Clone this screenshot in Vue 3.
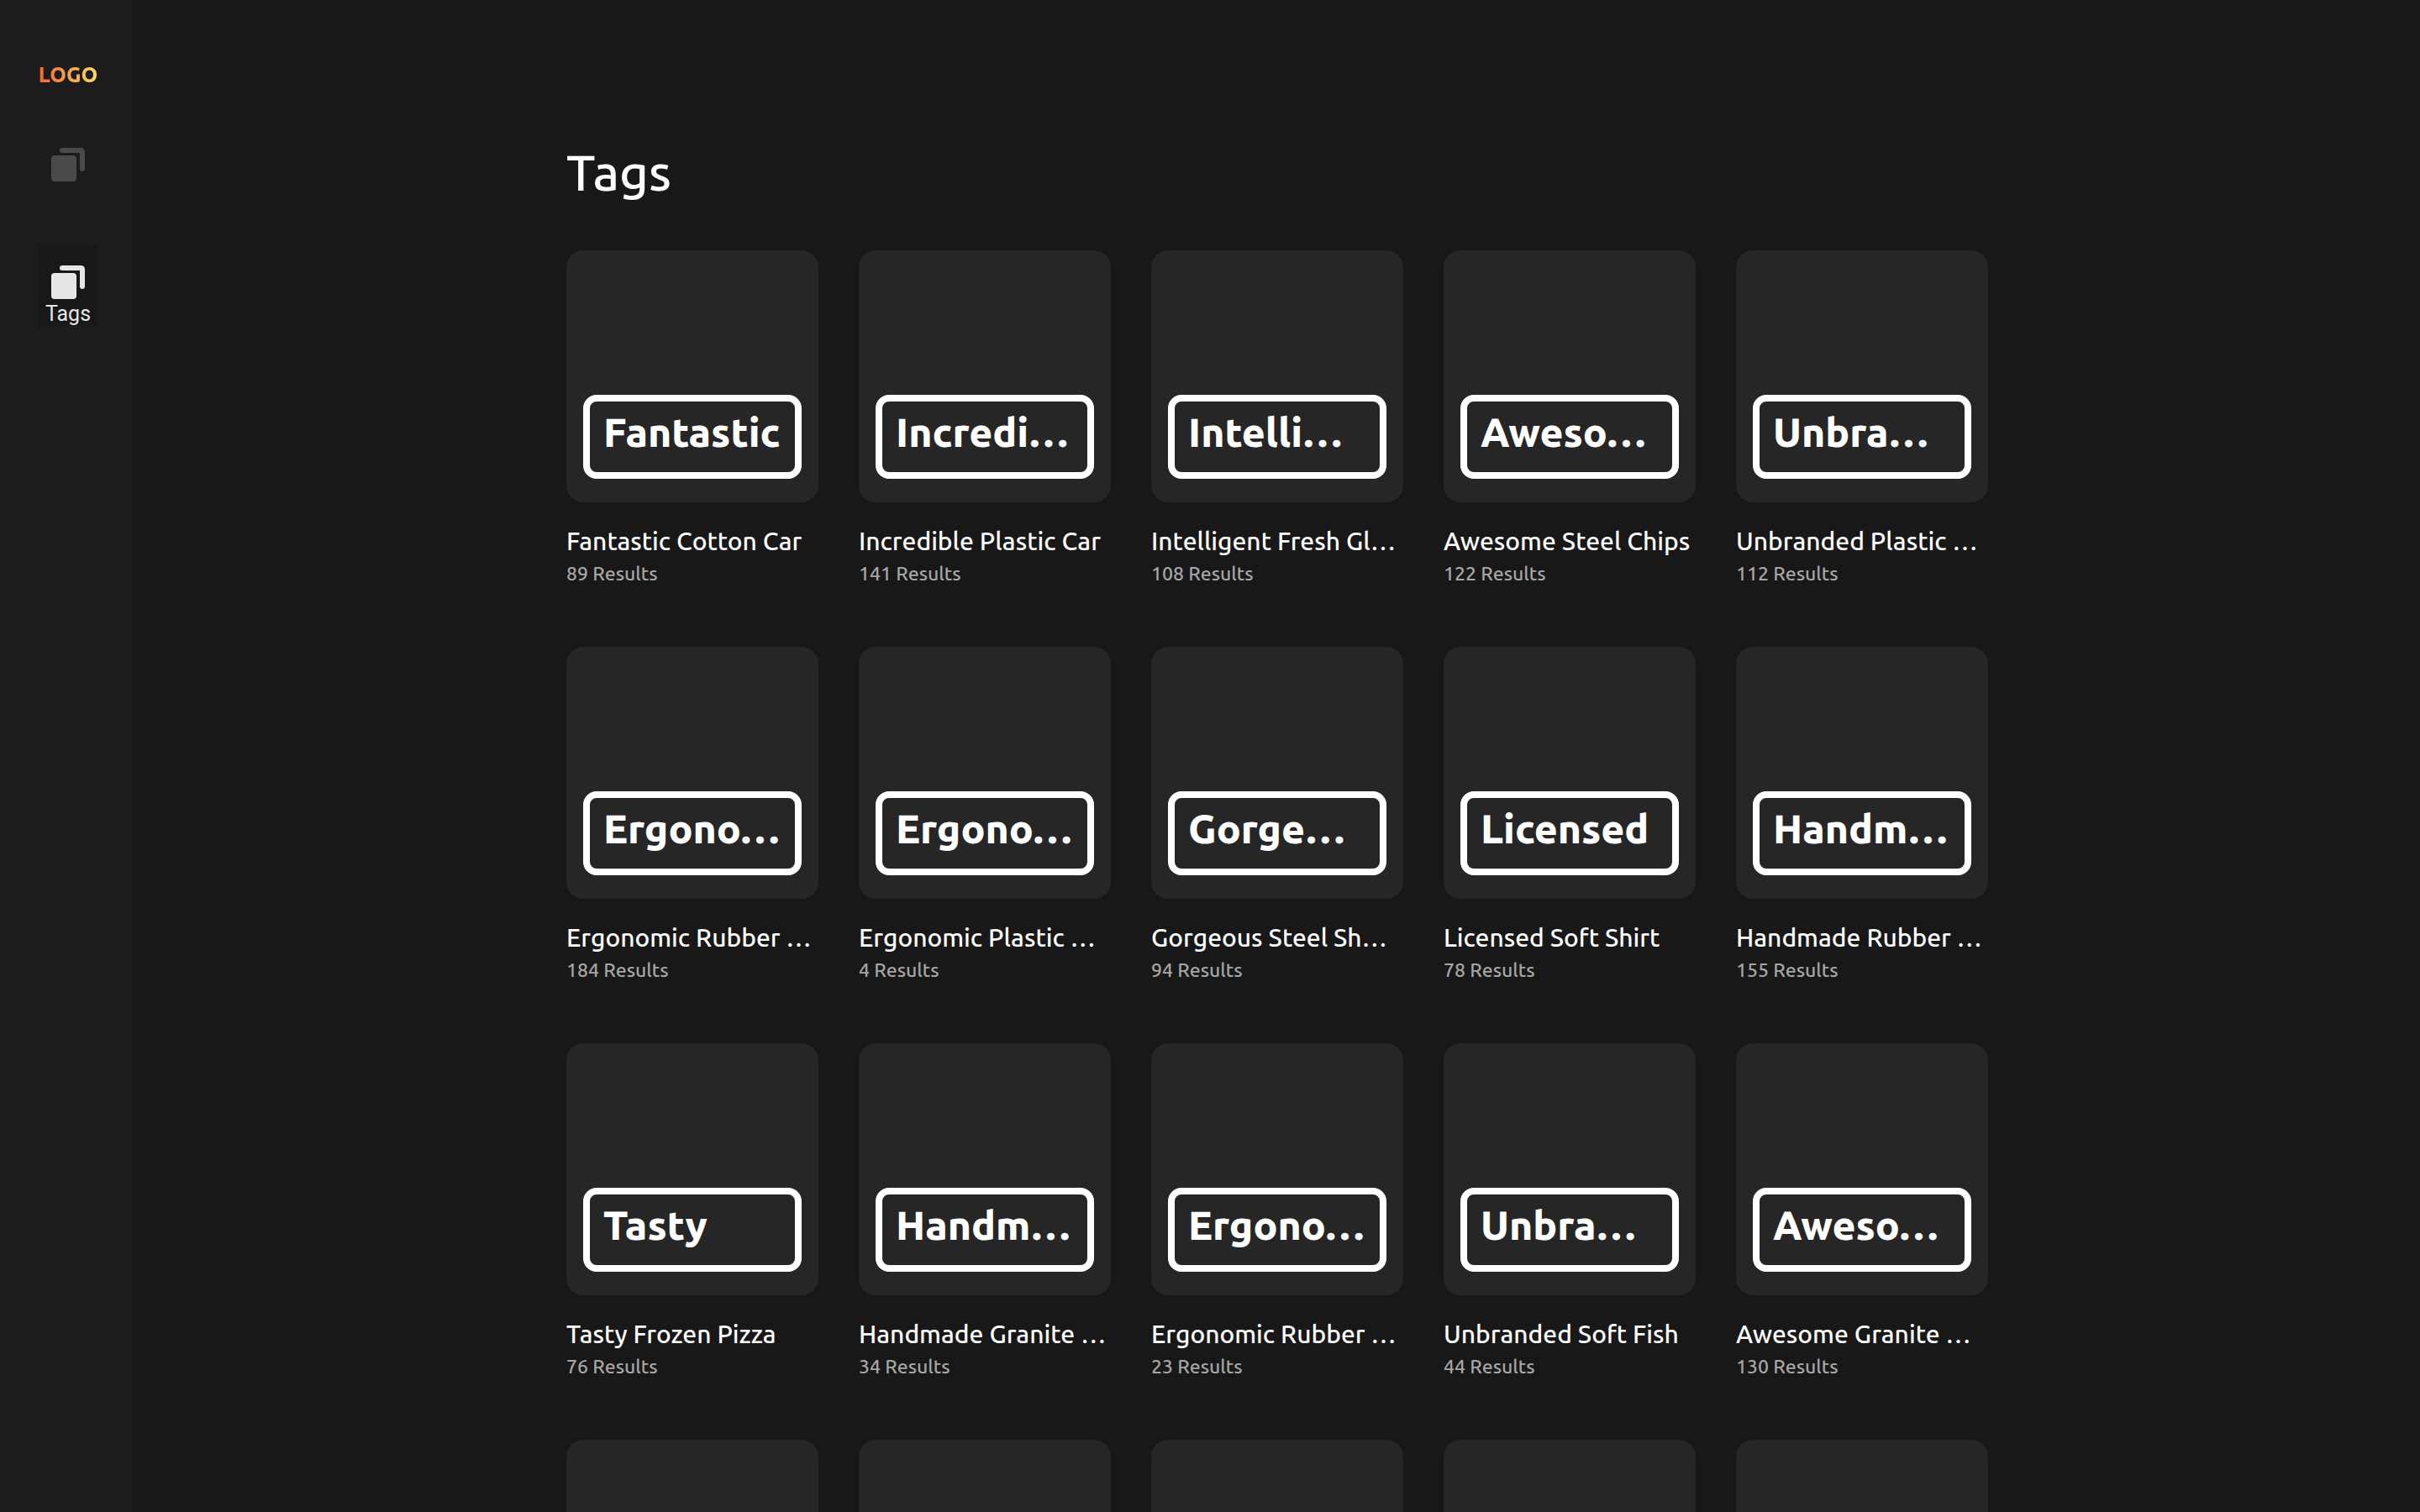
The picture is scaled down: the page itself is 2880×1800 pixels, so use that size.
<script setup>
const tags = [
  ['Fantastic', 'Fantastic Cotton Car', 89],
  ['Incredi…', 'Incredible Plastic Car', 141],
  ['Intelli…', 'Intelligent Fresh Gl…', 108],
  ['Aweso…', 'Awesome Steel Chips', 122],
  ['Unbra…', 'Unbranded Plastic …', 112],
  ['Ergono…', 'Ergonomic Rubber …', 184],
  ['Ergono…', 'Ergonomic Plastic …', 4],
  ['Gorge…', 'Gorgeous Steel Sh…', 94],
  ['Licensed', 'Licensed Soft Shirt', 78],
  ['Handm…', 'Handmade Rubber …', 155],
  ['Tasty', 'Tasty Frozen Pizza', 76],
  ['Handm…', 'Handmade Granite …', 34],
  ['Ergono…', 'Ergonomic Rubber …', 23],
  ['Unbra…', 'Unbranded Soft Fish', 44],
  ['Aweso…', 'Awesome Granite …', 130],
].map(([label, title, results]) => ({ label, title, results }))

const pending = 5
</script>

<template>
  <div class="app">
    <nav class="sidebar" aria-label="Main">
      <a class="logo" href="#">LOGO</a>
      <a class="item" href="#" aria-label="Collections">
        <svg class="icon" viewBox="0 0 40 40" aria-hidden="true">
          <rect x="0" y="9" width="30" height="31" rx="4" />
          <path d="M13 0H35Q40 0 40 5V25A3 3 0 0 1 34 25V6H13A3 3 0 0 1 13 0Z" />
        </svg>
      </a>
      <a class="item active" href="#" aria-current="page">
        <svg class="icon" viewBox="0 0 40 40" aria-hidden="true">
          <rect x="0" y="9" width="30" height="31" rx="4" />
          <path d="M13 0H35Q40 0 40 5V25A3 3 0 0 1 34 25V6H13A3 3 0 0 1 13 0Z" />
        </svg>
        <span>Tags</span>
      </a>
    </nav>

    <main class="main">
      <div class="content">
        <h1>Tags</h1>
        <div class="grid">
          <a v-for="(tag, i) in tags" :key="i" class="card" href="#">
            <div class="cover">
              <div class="label">{{ tag.label }}</div>
            </div>
            <div class="title">{{ tag.title }}</div>
            <div class="results">{{ tag.results }} Results</div>
          </a>
          <div v-for="n in pending" :key="'p' + n" class="card">
            <div class="cover"></div>
          </div>
        </div>
      </div>
    </main>
  </div>
</template>

<style>
body {
  background: #181818;
  overflow: hidden;
}
</style>

<style scoped>
.app {
  display: flex;
  height: 100vh;
  overflow: hidden;
  color: #fff;
  font-family: Ubuntu, "Noto Sans", sans-serif;
  font-weight: 500;
}

a {
  color: inherit;
  text-decoration: none;
}

.sidebar {
  display: flex;
  flex-direction: column;
  align-items: center;
  flex: none;
  box-sizing: border-box;
  width: 160px;
  padding: 73px 0 0 4px;
  border-right: 2px solid #181818;
  background: #1c1c1c;
}

.logo {
  margin-bottom: 47px;
  background: linear-gradient(90deg, #f06a2c, #ffd966);
  background-clip: text;
  color: transparent;
  font-size: 25px;
  font-weight: 800;
  line-height: 32px;
}

.item {
  display: flex;
  flex-direction: column;
  align-items: center;
  box-sizing: border-box;
  width: 70px;
  height: 96px;
  margin-bottom: 44px;
  padding-top: 24px;
  color: #4a4a4a;
  font-family: Roboto, sans-serif;
  font-size: 25px;
  font-weight: 400;
  line-height: 36px;
}

.item.active {
  background: #181818;
  color: #e6e6e6;
}

.icon {
  flex: none;
  width: 40px;
  height: 40px;
  fill: currentColor;
}

.main {
  flex: 1;
  min-width: 0;
  padding-top: 165px;
}

.content {
  max-width: 1692px;
  margin: 0 auto;
}

h1 {
  margin: 0 0 53px;
  font-size: 60px;
  font-weight: 500;
  line-height: 80px;
}

.grid {
  display: grid;
  grid-template-columns: repeat(5, 1fr);
  gap: 68px 48px;
}

.card {
  display: block;
  min-width: 0;
}

.cover {
  display: flex;
  flex-direction: column;
  justify-content: flex-end;
  box-sizing: border-box;
  aspect-ratio: 1;
  padding: 20px 20px 28px;
  border-radius: 20px;
  background: #262626;
}

.label {
  box-sizing: border-box;
  height: 100px;
  padding: 8px 16px;
  border: 8px solid #fff;
  border-radius: 16px;
  font-size: 48px;
  font-weight: 800;
  line-height: 56px;
  white-space: nowrap;
}

.title {
  margin-top: 26px;
  font-size: 30px;
  line-height: 40px;
  white-space: nowrap;
}

.results {
  color: #a6a6a6;
  font-size: 23px;
  line-height: 38px;
}
</style>
